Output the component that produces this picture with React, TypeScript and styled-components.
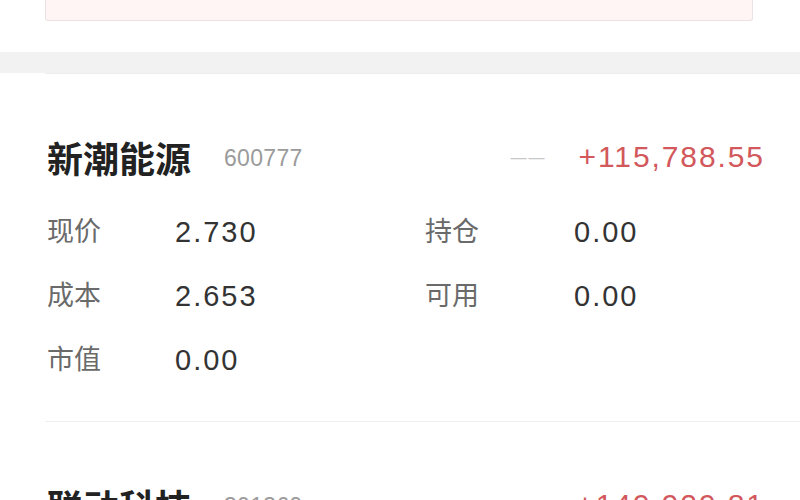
import styled, { createGlobalStyle } from 'styled-components';

const GlobalStyle = createGlobalStyle`
  html, body {
    margin: 0;
    padding: 0;
    background: #ffffff;
  }
  body {
    font-family: "Liberation Sans", "Noto Sans CJK SC", sans-serif;
    overflow: hidden;
  }
`;

type Stat = { label: string; value: string };

type Holding = {
  name: string;
  code: string;
  change: string;
  profit: string;
  stats: Stat[];
};

const holdings: Holding[] = [
  {
    name: '新潮能源',
    code: '600777',
    change: '——',
    profit: '+115,788.55',
    stats: [
      { label: '现价', value: '2.730' },
      { label: '持仓', value: '0.00' },
      { label: '成本', value: '2.653' },
      { label: '可用', value: '0.00' },
      { label: '市值', value: '0.00' },
    ],
  },
  {
    name: '联动科技',
    code: '301369',
    change: '',
    profit: '+149,929.81',
    stats: [
      { label: '现价', value: '0.000' },
      { label: '持仓', value: '0.00' },
    ],
  },
];

const App = () => {
  return (
    <Page>
      <GlobalStyle />
      <Notice>
        <NoticeText>温馨提示：以上数据仅供参考，请以实际成交为准</NoticeText>
      </Notice>
      <Band />
      <List>
        {holdings.map((h) => (
          <Item key={h.code}>
            <Header>
              <Name>{h.name}</Name>
              <Code>{h.code}</Code>
              <Right>
                {h.change && <Dash>{h.change}</Dash>}
                <Profit>{h.profit}</Profit>
              </Right>
            </Header>
            <Stats>
              {h.stats.map((s) => (
                <Cell key={s.label}>
                  <Label>{s.label}</Label>
                  <Value>{s.value}</Value>
                </Cell>
              ))}
            </Stats>
          </Item>
        ))}
      </List>
    </Page>
  );
};

const Page = styled.div`
  width: 800px;
  height: 500px;
  overflow: hidden;
  background: #ffffff;
`;

const Notice = styled.div`
  margin: 0 47px 0 45px;
  height: 20px;
  overflow: hidden;
  background: #fff5f5;
  border: 1px solid #ebe3e3;
  border-top: none;
  border-radius: 0 0 3px 3px;
  padding-left: 50px;
  box-sizing: content-box;
`;

const NoticeText = styled.div`
  margin-top: -22px;
  font-size: 20px;
  line-height: 24px;
  color: #eee6e6;
  font-family: "Noto Sans CJK SC", sans-serif;
`;

const Band = styled.div`
  margin-top: 31px;
  height: 21px;
  background: #f2f2f2;
`;

const List = styled.div`
  display: flex;
  flex-direction: column;
`;

const Item = styled.div`
  margin-left: 45px;
  border-top: 1px solid #eeeeee;
  padding: 53px 37px 29px 2px;
`;

const Header = styled.div`
  display: flex;
  align-items: center;
  height: 60px;
`;

const Name = styled.div`
  font-family: "Noto Sans CJK SC", sans-serif;
  font-weight: 700;
  font-size: 36px;
  color: #222222;
  line-height: 1;
`;

const Code = styled.div`
  margin-left: 33px;
  font-size: 23px;
  letter-spacing: 0.3px;
  color: #9b9b9b;
  padding-top: 2px;
`;

const Right = styled.div`
  margin-left: auto;
  display: flex;
  align-items: center;
  gap: 32px;
`;

const Dash = styled.div`
  font-size: 16px;
  letter-spacing: 2px;
  color: #c8c8c8;
  padding-top: 2px;
`;

const Profit = styled.div`
  font-size: 30px;
  letter-spacing: 1.9px;
  margin-right: -1.9px;
  color: #d2585c;
`;

const Stats = styled.div`
  margin-top: 13px;
  display: grid;
  grid-template-columns: 378px 1fr;
  grid-auto-rows: 64px;
`;

const Cell = styled.div`
  display: flex;
  align-items: center;
`;

const Label = styled.div`
  width: 128px;
  flex: none;
  padding-bottom: 6px;
  font-family: "Noto Sans CJK SC", sans-serif;
  font-size: 27px;
  color: #6a6a6a;
  ${Cell}:nth-child(even) & {
    width: 149px;
  }
`;

const Value = styled.div`
  font-size: 29px;
  letter-spacing: 2px;
  color: #333333;
`;

export default App;
